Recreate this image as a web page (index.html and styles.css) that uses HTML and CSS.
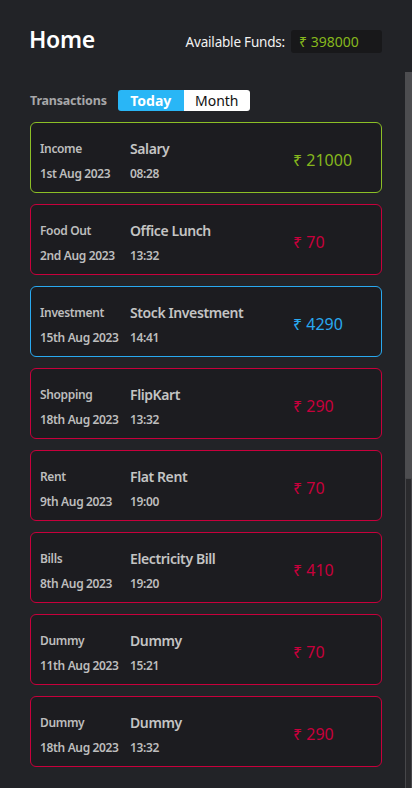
FILE: index.html
```html
<!DOCTYPE html>
<html lang="en">
<head>
<meta charset="utf-8">
<title>Home</title>
<link rel="stylesheet" href="styles.css">
</head>
<body>
<div class="app">
  <header class="header">
    <h1 class="title">Home</h1>
    <div class="funds">
      <span class="funds-label">Available Funds:</span>
      <span class="funds-box">₹ 398000</span>
    </div>
  </header>
  <div class="scroll">
    <main class="content">
      <div class="tx-head">
        <span class="tx-label">Transactions</span>
        <div class="toggle">
          <span class="toggle-btn active">Today</span>
          <span class="toggle-btn">Month</span>
        </div>
      </div>
      <ul class="list">
        <li class="card income">
          <div class="col"><span class="cat">Income</span><span class="date">1st Aug 2023</span></div>
          <div class="col"><span class="name">Salary</span><span class="time">08:28</span></div>
          <div class="amount">₹ 21000</div>
        </li>
        <li class="card expense">
          <div class="col"><span class="cat">Food Out</span><span class="date">2nd Aug 2023</span></div>
          <div class="col"><span class="name">Office Lunch</span><span class="time">13:32</span></div>
          <div class="amount">₹ 70</div>
        </li>
        <li class="card invest">
          <div class="col"><span class="cat">Investment</span><span class="date">15th Aug 2023</span></div>
          <div class="col"><span class="name">Stock Investment</span><span class="time">14:41</span></div>
          <div class="amount">₹ 4290</div>
        </li>
        <li class="card expense">
          <div class="col"><span class="cat">Shopping</span><span class="date">18th Aug 2023</span></div>
          <div class="col"><span class="name">FlipKart</span><span class="time">13:32</span></div>
          <div class="amount">₹ 290</div>
        </li>
        <li class="card expense">
          <div class="col"><span class="cat">Rent</span><span class="date">9th Aug 2023</span></div>
          <div class="col"><span class="name">Flat Rent</span><span class="time">19:00</span></div>
          <div class="amount">₹ 70</div>
        </li>
        <li class="card expense">
          <div class="col"><span class="cat">Bills</span><span class="date">8th Aug 2023</span></div>
          <div class="col"><span class="name">Electricity Bill</span><span class="time">19:20</span></div>
          <div class="amount">₹ 410</div>
        </li>
        <li class="card expense">
          <div class="col"><span class="cat">Dummy</span><span class="date">11th Aug 2023</span></div>
          <div class="col"><span class="name">Dummy</span><span class="time">15:21</span></div>
          <div class="amount">₹ 70</div>
        </li>
        <li class="card expense">
          <div class="col"><span class="cat">Dummy</span><span class="date">18th Aug 2023</span></div>
          <div class="col"><span class="name">Dummy</span><span class="time">13:32</span></div>
          <div class="amount">₹ 290</div>
        </li>
      </ul>
    </main>
    <div class="scrollbar"><div class="thumb"></div><div class="track"></div></div>
  </div>
</div>
</body>
</html>
```
FILE: styles.css
```css
* { box-sizing: border-box; }
html, body { margin: 0; padding: 0; }
body {
  background: #222327;
  font-family: "Noto Sans", "Open Sans", sans-serif;
  color: #c4c4c4;
  width: 412px;
  height: 788px;
  overflow: hidden;
}
.app {
  display: flex;
  flex-direction: column;
  height: 788px;
}
.header {
  display: flex;
  justify-content: space-between;
  align-items: center;
  height: 72px;
  padding: 11px 30px 0 29px;
}
.title {
  margin: -6px 0 0;
  font-size: 23px;
  font-weight: 600;
  color: #ffffff;
  line-height: 30px;
  letter-spacing: -0.3px;
}
.funds {
  display: flex;
  align-items: center;
  gap: 6px;
}
.funds-label {
  font-size: 13.5px;
  color: #f2f2f2;
  letter-spacing: -0.2px;
}
.funds-box {
  width: 91px;
  height: 23px;
  background: #18181a;
  border-radius: 3px;
  color: #86b71d;
  font-size: 14px;
  line-height: 23px;
  padding-left: 8px;
}
.scroll {
  flex: 1;
  display: flex;
  min-height: 0;
}
.content {
  flex: 1;
  padding: 18px 23px 0 30px;
}
.tx-head {
  display: flex;
  align-items: center;
  gap: 11px;
  height: 21px;
}
.tx-label {
  font-size: 12.5px;
  font-weight: 700;
  color: #a7a7a9;
  letter-spacing: -0.2px;
}
.toggle {
  display: flex;
  border-radius: 3px;
  overflow: hidden;
}
.toggle-btn {
  width: 66px;
  height: 21px;
  line-height: 21px;
  text-align: center;
  font-size: 14px;
  background: #ffffff;
  color: #111;
}
.toggle-btn.active {
  background: #29b6f6;
  color: #ffffff;
  font-weight: 700;
}
.list {
  list-style: none;
  margin: 11px 0 0;
  padding: 0;
  display: flex;
  flex-direction: column;
  gap: 11px;
}
.card {
  height: 71px;
  border: 1px solid #c8003c;
  border-radius: 6px;
  background: #1c1c20;
  display: grid;
  grid-template-columns: 90px 163px 1fr;
  padding: 13px 0 0 9px;
}
.card.income { border-color: #8cbf26; }
.card.invest { border-color: #29a9f0; }
.col {
  display: flex;
  flex-direction: column;
}
.cat, .date, .time {
  font-size: 12px;
  line-height: 25px;
  font-weight: 600;
  color: #bdbdbd;
  letter-spacing: -0.35px;
}
.name {
  font-size: 14px;
  line-height: 25px;
  font-weight: 600;
  color: #c4c4c4;
  letter-spacing: -0.4px;
}
.amount {
  align-self: center;
  font-size: 16px;
  margin-top: -8px;
  color: #c8003c;
}
.income .amount { color: #86b71d; }
.invest .amount { color: #29a9f0; }
.scrollbar {
  width: 7px;
  display: flex;
  flex-direction: column;
}
.thumb {
  height: 406px;
  background: #4d4d50;
}
.track {
  flex: 1;
  background: #2a2a2d;
  border: 1px solid #47474a;
  border-bottom: none;
}
```
